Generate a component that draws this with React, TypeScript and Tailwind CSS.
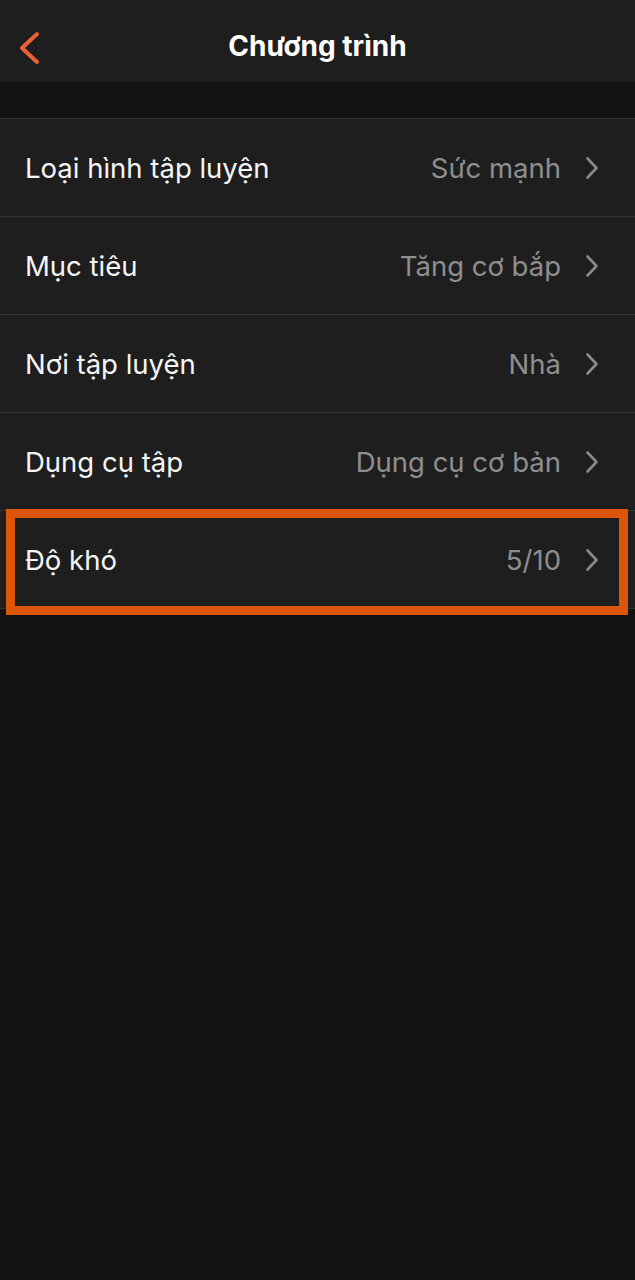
import React from "react";

const rows = [
  { label: "Loại hình tập luyện", value: "Sức mạnh" },
  { label: "Mục tiêu", value: "Tăng cơ bắp" },
  { label: "Nơi tập luyện", value: "Nhà" },
  { label: "Dụng cụ tập", value: "Dụng cụ cơ bản" },
  { label: "Độ khó", value: "5/10", highlight: true },
];

const Chevron = () => (
  <svg width="14" height="24" viewBox="0 0 14 24" fill="none" className="ml-[24px]">
    <path d="M2.5 2.5 L11.5 12 L2.5 21.5" stroke="#8a8a8a" strokeWidth="2.6" strokeLinecap="round" strokeLinejoin="round" />
  </svg>
);

export default function App() {
  return (
    <div
      className="min-h-[1280px] w-full bg-[#121212] text-white"
      style={{ fontFamily: "Inter, 'Noto Sans', sans-serif" }}
    >
      <header className="relative flex h-[82px] items-center justify-center bg-[#1e1e1e]">
        <button className="absolute left-[16px] top-[31px]">
          <svg width="26" height="34" viewBox="0 0 26 34" fill="none">
            <path d="M21 3 L6 17 L21 31" stroke="#ea5f35" strokeWidth="4" strokeLinecap="round" strokeLinejoin="round" />
          </svg>
        </button>
        <h1 className="mt-[10px] text-[28px] font-bold">Chương trình</h1>
      </header>

      <div className="h-[36px]" />

      <div className="border-t border-[#333333]">
        {rows.map((r) => (
          <div key={r.label} className="relative">
            <div className="flex h-[98px] items-center justify-between border-b border-[#333333] bg-[#1e1e1e] pl-[25px] pr-[36px]">
              <span className="mt-[2px] text-[27.5px] text-[#f5f5f5]">{r.label}</span>
              <div className="flex items-center">
                <span className="mt-[2px] text-[27.5px] text-[#8e8e8e]">{r.value}</span>
                <Chevron />
              </div>
            </div>
            {r.highlight && (
              <div className="pointer-events-none absolute left-[6px] right-[7px] top-[-2px] bottom-[-6px] border-[9px] border-[#db5608]" />
            )}
          </div>
        ))}
      </div>
    </div>
  );
}
